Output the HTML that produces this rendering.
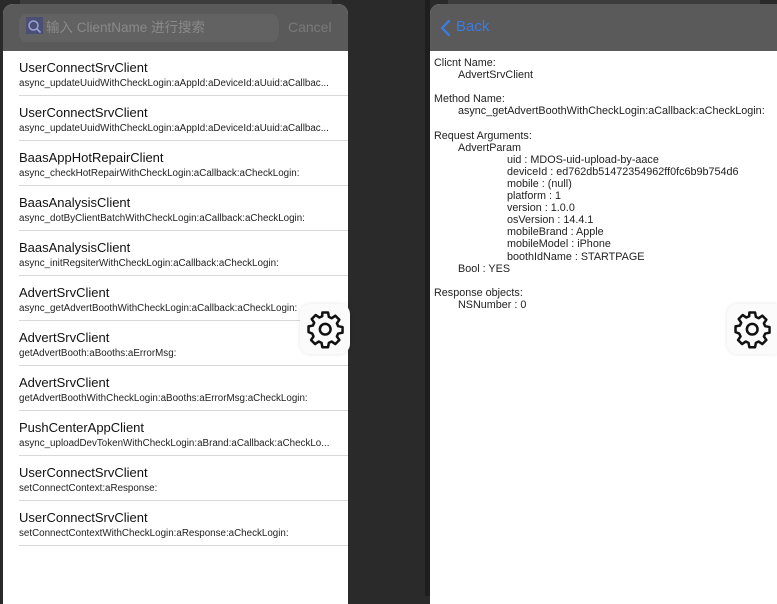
<!DOCTYPE html>
<html><head><style>
*{margin:0;padding:0;box-sizing:border-box}
body{width:777px;height:596px;background:#2a2a2a;position:relative;overflow:hidden;font-family:"Liberation Sans","Noto Sans CJK SC",sans-serif}
.back1{position:absolute;left:20px;top:0;width:312px;height:10px;background:#3c3c3c;border-radius:0 0 8px 8px}
.back2{position:absolute;left:448px;top:0;width:312px;height:10px;background:#3c3c3c;border-radius:0 0 8px 8px}
.lp{position:absolute;left:3px;top:4px;width:345px;height:600px;background:#fff;border-radius:10px 10px 0 0;overflow:hidden}
.lh{height:47px;background:#5a5a5a;position:relative}
.sb{position:absolute;left:16px;top:10px;width:260px;height:28px;background:#626262;border-radius:8px;color:#8a8a8a;font-size:13.5px;line-height:28px;padding-left:7px}
.sb .q{display:inline-block;background:#4b4f74;width:17px;height:17px;vertical-align:-3px;margin-right:3px;position:relative}
.cancel{position:absolute;left:285px;top:9px;color:#7a7a7a;font-size:14px;line-height:28px}
.row{height:45px;border-bottom:1px solid #d8d8d8;margin-left:16px;padding-top:9px;white-space:nowrap;overflow:hidden}
.row .t{font-size:13px;color:#111;line-height:15px}
.row .s{font-size:9.8px;color:#222;line-height:13px;margin-top:2px}
.mid{position:absolute;left:425px;top:0;width:5px;height:596px;background:#1e1e1e}
.rp{position:absolute;left:430px;top:4px;width:347px;height:600px;background:#fff;border-radius:10px 0 0 0;overflow:hidden}
.rh{height:47px;background:#5a5a5a;color:#3d7ae0;font-size:15px;line-height:46px;padding-left:26px;position:relative}
.rb{position:absolute;left:4px;top:53px;font-size:10.8px;line-height:12.1px;color:#222;white-space:pre}
.rb .a{margin-left:24px}.rb .b{margin-left:73px}
.gear{position:absolute;width:50px;height:50px;background:#fbfbfb;border-radius:10px;box-shadow:0 0 4px rgba(0,0,0,.1)}
</style></head><body>
<div class="back1"></div><div class="back2"></div>
<div class="lp">
<div class="lh"><div class="sb"><span class="q"><svg width="17" height="17" viewBox="0 0 17 17"><circle cx="7.5" cy="7.5" r="4.5" fill="none" stroke="#9aa0d8" stroke-width="1.5"/><path d="M11 11l3.5 3.5" stroke="#9aa0d8" stroke-width="1.6"/></svg></span>输入 ClientName 进行搜索</div><div class="cancel">Cancel</div></div>
<div class="row"><div class="t">UserConnectSrvClient</div><div class="s">async_updateUuidWithCheckLogin:aAppId:aDeviceId:aUuid:aCallbac...</div></div>
<div class="row"><div class="t">UserConnectSrvClient</div><div class="s">async_updateUuidWithCheckLogin:aAppId:aDeviceId:aUuid:aCallbac...</div></div>
<div class="row"><div class="t">BaasAppHotRepairClient</div><div class="s">async_checkHotRepairWithCheckLogin:aCallback:aCheckLogin:</div></div>
<div class="row"><div class="t">BaasAnalysisClient</div><div class="s">async_dotByClientBatchWithCheckLogin:aCallback:aCheckLogin:</div></div>
<div class="row"><div class="t">BaasAnalysisClient</div><div class="s">async_initRegsiterWithCheckLogin:aCallback:aCheckLogin:</div></div>
<div class="row"><div class="t">AdvertSrvClient</div><div class="s">async_getAdvertBoothWithCheckLogin:aCallback:aCheckLogin:</div></div>
<div class="row"><div class="t">AdvertSrvClient</div><div class="s">getAdvertBooth:aBooths:aErrorMsg:</div></div>
<div class="row"><div class="t">AdvertSrvClient</div><div class="s">getAdvertBoothWithCheckLogin:aBooths:aErrorMsg:aCheckLogin:</div></div>
<div class="row"><div class="t">PushCenterAppClient</div><div class="s">async_uploadDevTokenWithCheckLogin:aBrand:aCallback:aCheckLo...</div></div>
<div class="row"><div class="t">UserConnectSrvClient</div><div class="s">setConnectContext:aResponse:</div></div>
<div class="row"><div class="t">UserConnectSrvClient</div><div class="s">setConnectContextWithCheckLogin:aResponse:aCheckLogin:</div></div>
</div>
<div class="mid"></div>
<div class="rp">
<div class="rh"><svg style="position:absolute;left:10px;top:15px" width="12" height="18" viewBox="0 0 12 18"><path d="M9 2L2 9l7 7" fill="none" stroke="#3d7ae0" stroke-width="2.4" stroke-linecap="round" stroke-linejoin="round"/></svg>Back</div>
<div class="rb"><div>Clicnt Name:</div><div class="a">AdvertSrvClient</div><div>&nbsp;</div><div>Method Name:</div><div class="a">async_getAdvertBoothWithCheckLogin:aCallback:aCheckLogin:</div><div>&nbsp;</div><div>Request Arguments:</div><div class="a">AdvertParam</div><div class="b">uid : MDOS-uid-upload-by-aace</div><div class="b">deviceId : ed762db51472354962ff0fc6b9b754d6</div><div class="b">mobile : (null)</div><div class="b">platform : 1</div><div class="b">version : 1.0.0</div><div class="b">osVersion : 14.4.1</div><div class="b">mobileBrand : Apple</div><div class="b">mobileModel : iPhone</div><div class="b">boothIdName : STARTPAGE</div><div class="a">Bool : YES</div><div>&nbsp;</div><div>Response objects:</div><div class="a">NSNumber : 0</div></div>
</div>
<div class="gear" style="left:300px;top:304px"><svg width="50" height="50" viewBox="0 0 24 24" style="position:absolute;left:0;top:0"><g transform="translate(2.5,2.5) scale(0.8)"><path fill="none" stroke="#111" stroke-width="1.5" stroke-linejoin="round" d="M10.3 2h3.4l.5 2.6 1.7.8 2.2-1.5 2.4 2.4-1.5 2.2.8 1.7 2.6.5v3.4l-2.6.5-.8 1.7 1.5 2.2-2.4 2.4-2.2-1.5-1.7.8-.5 2.6h-3.4l-.5-2.6-1.7-.8-2.2 1.5-2.4-2.4 1.5-2.2-.8-1.7L2 13.7v-3.4l2.6-.5.8-1.7-1.5-2.2 2.4-2.4 2.2 1.5 1.7-.8z"/><circle cx="12" cy="12" r="3.2" fill="none" stroke="#111" stroke-width="1.5"/></g></svg></div>
<div class="gear" style="left:727px;top:304px;border-radius:10px 0 0 10px"><svg width="50" height="50" viewBox="0 0 24 24" style="position:absolute;left:0;top:0"><g transform="translate(2.5,2.5) scale(0.8)"><path fill="none" stroke="#111" stroke-width="1.5" stroke-linejoin="round" d="M10.3 2h3.4l.5 2.6 1.7.8 2.2-1.5 2.4 2.4-1.5 2.2.8 1.7 2.6.5v3.4l-2.6.5-.8 1.7 1.5 2.2-2.4 2.4-2.2-1.5-1.7.8-.5 2.6h-3.4l-.5-2.6-1.7-.8-2.2 1.5-2.4-2.4 1.5-2.2-.8-1.7L2 13.7v-3.4l2.6-.5.8-1.7-1.5-2.2 2.4-2.4 2.2 1.5 1.7-.8z"/><circle cx="12" cy="12" r="3.2" fill="none" stroke="#111" stroke-width="1.5"/></g></svg></div>
</body></html>
